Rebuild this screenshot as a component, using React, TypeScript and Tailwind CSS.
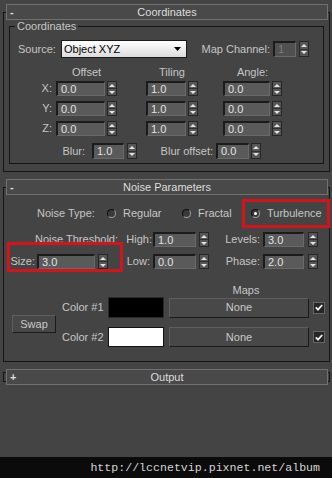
import React from 'react'

const label = 'text-[#c6c6c6] leading-none whitespace-nowrap'

function Spin() {
  return (
    <div className="w-[10px] h-full flex flex-col border border-[#262626] bg-[#565656]">
      <div className="flex-1 flex items-center justify-center border-b border-[#303030]">
        <svg width="6" height="3" viewBox="0 0 6 3"><path d="M0 3 L3 0 L6 3Z" fill="#e4e4e4" /></svg>
      </div>
      <div className="flex-1 flex items-center justify-center">
        <svg width="6" height="3" viewBox="0 0 6 3"><path d="M0 0 L6 0 L3 3Z" fill="#e4e4e4" /></svg>
      </div>
    </div>
  )
}

function Num({ v, w, gap = 'ml-[2px]', dim = false }: { v: string; w: string; gap?: string; dim?: boolean }) {
  return (
    <div className="flex h-full">
      <div
        className={`${w} h-full flex items-center pl-[3px] leading-none border-t-2 border-l-2 border-t-[#1b1b1b] border-l-[#1b1b1b] border-r border-b border-r-[#6a6a6a] border-b-[#6a6a6a] ${
          dim ? 'bg-[#505050] text-[#7c7c7c]' : 'bg-[#5a5a5a] text-[#e2e2e2]'
        }`}
      >
        {v}
      </div>
      <div className={`${gap} h-full`}>
        <Spin />
      </div>
    </div>
  )
}

function Header({ title, sign }: { title: string; sign: string }) {
  return (
    <div className="ml-[2px] mr-[1px] h-[16px] flex items-center bg-[#494949] border border-[#707070] text-[#dedede] leading-none">
      <span className="w-[16px] pl-[3px] font-bold">{sign}</span>
      <span className="flex-1 text-center">{title}</span>
      <span className="w-[16px]" />
    </div>
  )
}

function Radio({ on = false }: { on?: boolean }) {
  return (
    <div className="w-[9px] h-[9px] rounded-full bg-[#3a3a3a] border border-t-[#0e0e0e] border-l-[#0e0e0e] border-r-[#a0a0a0] border-b-[#a0a0a0] flex items-center justify-center">
      {on && <div className="w-[3px] h-[3px] rounded-full bg-white" />}
    </div>
  )
}

function Check() {
  return (
    <div className="w-[12px] h-[12px] bg-[#262626] border border-[#666666] flex items-center justify-center">
      <svg width="8" height="7" viewBox="0 0 8 7">
        <path d="M0.8 3.4 L3 5.6 L7.2 1" stroke="#f2f2f2" strokeWidth="1.8" fill="none" />
      </svg>
    </div>
  )
}

function Btn({ text, w, h }: { text: string; w: string; h: string }) {
  return (
    <div
      className={`${w} ${h} flex items-center justify-center leading-none bg-[#484848] border border-t-[#5e5e5e] border-l-[#5e5e5e] border-r-[#1a1a1a] border-b-[#1a1a1a] text-[#c8c8c8]`}
    >
      {text}
    </div>
  )
}

function XYZRow({ axis, first }: { axis: string; first?: boolean }) {
  return (
    <div className={`flex h-[15px] items-center ${first ? 'mt-[2px]' : 'mt-[5px]'}`}>
      <span className={`${label} w-[46px] text-right pr-[4px]`}>{axis}:</span>
      <Num v="0.0" w="w-[49px]" />
      <span className="w-[29px]" />
      <Num v="1.0" w="w-[40px]" />
      <span className="w-[25px]" />
      <Num v="0.0" w="w-[47px]" />
    </div>
  )
}

export default function App() {
  return (
    <div className="w-[332px] h-[478px] bg-[#444444] flex flex-col font-['Liberation_Sans',Arial,sans-serif] text-[11px] overflow-hidden">
      <div className="flex-1 pt-[12px]">
        {/* Coordinates rollout */}
        <div className="ml-[3px] w-[327px] border border-[#151515] pb-[7px]">
          <div className="-mt-[9px]">
            <Header title="Coordinates" sign="-" />
          </div>
          <div className="relative mt-[6px] ml-[5px] mr-[5px] border border-[#151515] pb-[4px]">
            <span className={`${label} absolute left-[5px] -top-[6px] px-[2px] bg-[#444444]`}>Coordinates</span>
            <div className="flex h-[18px] mt-[13px] items-center">
              <span className={`${label} w-[51px] pl-[8px]`}>Source:</span>
              <div className="w-[126px] h-full flex items-center border border-[#1a1a1a] bg-linear-to-b from-white to-[#dcdcdc] text-black pl-[2px] pr-[5px] leading-none">
                <span className="flex-1">Object XYZ</span>
                <svg width="7" height="4" viewBox="0 0 7 4"><path d="M0 0 L7 0 L3.5 4Z" fill="#000" /></svg>
              </div>
              <span className={`${label} w-[86px] text-right pr-[3px]`}>Map Channel:</span>
              <div className="h-[16px]">
                <Num v="1" w="w-[23px]" gap="ml-[3px]" dim />
              </div>
            </div>
            <div className={`flex h-[13px] mt-[8px] items-center ${label}`}>
              <span className="w-[46px]" />
              <span className="w-[61px] text-center">Offset</span>
              <span className="w-[29px]" />
              <span className="w-[52px] text-center">Tiling</span>
              <span className="w-[25px]" />
              <span className="w-[59px] text-center">Angle:</span>
            </div>
            <XYZRow axis="X" first />
            <XYZRow axis="Y" />
            <XYZRow axis="Z" />
            <div className="flex h-[16px] mt-[7px] items-center">
              <span className={`${label} w-[82px] text-right pr-[7px]`}>Blur:</span>
              <Num v="1.0" w="w-[32px]" gap="ml-[3px]" />
              <span className={`${label} w-[79px] text-right pr-[3px]`}>Blur offset:</span>
              <Num v="0.0" w="w-[33px]" />
            </div>
          </div>
        </div>

        {/* Noise Parameters rollout */}
        <div className="relative mt-[15px] ml-[3px] w-[327px] border border-[#151515] pb-[14px]">
          <div className="-mt-[9px]">
            <Header title="Noise Parameters" sign="-" />
          </div>
          <div className="flex h-[14px] mt-[11px] items-center">
            <span className={`${label} w-[103px] pl-[33px]`}>Noise Type:</span>
            <div className="w-[75px] flex items-center">
              <Radio />
              <span className={`${label} ml-[7px]`}>Regular</span>
            </div>
            <div className="w-[69px] flex items-center">
              <Radio />
              <span className={`${label} ml-[7px]`}>Fractal</span>
            </div>
            <div className="flex items-center">
              <Radio on />
              <span className={`${label} ml-[7px]`}>Turbulence</span>
            </div>
          </div>
          <div className="flex h-[15px] mt-[12px] items-center">
            <span className={`${label} w-[116px] text-right pr-[2px]`}>Noise Threshold:</span>
            <span className={`${label} w-[33px] text-right pr-[1px]`}>High:</span>
            <Num v="1.0" w="w-[43px]" gap="ml-[3px]" />
            <span className={`${label} w-[54px] text-right pr-[3px]`}>Levels:</span>
            <Num v="3.0" w="w-[41px]" gap="ml-[4px]" />
          </div>
          <div className="flex h-[15px] mt-[7px] items-center">
            <span className={`${label} w-[33px] text-right pr-[2px]`}>Size:</span>
            <Num v="3.0" w="w-[58px]" gap="ml-[3px]" />
            <span className={`${label} w-[45px] text-right pr-[3px]`}>Low:</span>
            <Num v="0.0" w="w-[43px]" gap="ml-[3px]" />
            <span className={`${label} w-[54px] text-right pr-[3px]`}>Phase:</span>
            <Num v="2.0" w="w-[41px]" gap="ml-[4px]" />
          </div>
          <div className="flex h-[13px] mt-[15px] items-center">
            <span className={`${label} ml-[165px] w-[154px] text-center`}>Maps</span>
          </div>
          <div className="flex items-start">
            <div className="ml-[8px] mt-[18px]">
              <Btn text="Swap" w="w-[44px]" h="h-[18px]" />
            </div>
            <div className="ml-[6px] flex flex-col">
              <div className="flex h-[21px] items-center">
                <span className={`${label} w-[46px]`}>Color #1</span>
                <div className="w-[56px] h-full bg-black border border-[#2a2a2a]" />
                <div className="ml-[5px]">
                  <Btn text="None" w="w-[140px]" h="h-[20px]" />
                </div>
                <div className="ml-[4px]">
                  <Check />
                </div>
              </div>
              <div className="flex h-[20px] mt-[9px] items-center">
                <span className={`${label} w-[46px]`}>Color #2</span>
                <div className="w-[56px] h-full bg-white border border-[#111111]" />
                <div className="ml-[5px]">
                  <Btn text="None" w="w-[140px]" h="h-[20px]" />
                </div>
                <div className="ml-[4px]">
                  <Check />
                </div>
              </div>
            </div>
          </div>
          {/* annotation boxes */}
          <div className="absolute left-[238px] top-[11px] w-[88px] h-[29px] border-[3px] border-[#d3141b]" />
          <div className="absolute left-[3px] top-[54px] w-[116px] h-[30px] border-[3px] border-[#d3141b]" />
        </div>

        {/* Output rollout (collapsed) */}
        <div className="mt-[10px] ml-[3px] w-[327px] h-[10px] border border-[#151515]">
          <div className="-mt-[4px]">
            <Header title="Output" sign="+" />
          </div>
        </div>
      </div>
      <div className="h-[21px] bg-[#0b0b0b] flex items-center justify-end pr-[12px]">
        <span className="font-['Liberation_Mono',monospace] text-[11.6px] text-[#d6d6d6] leading-none">
          http://lccnetvip.pixnet.net/album
        </span>
      </div>
    </div>
  )
}
